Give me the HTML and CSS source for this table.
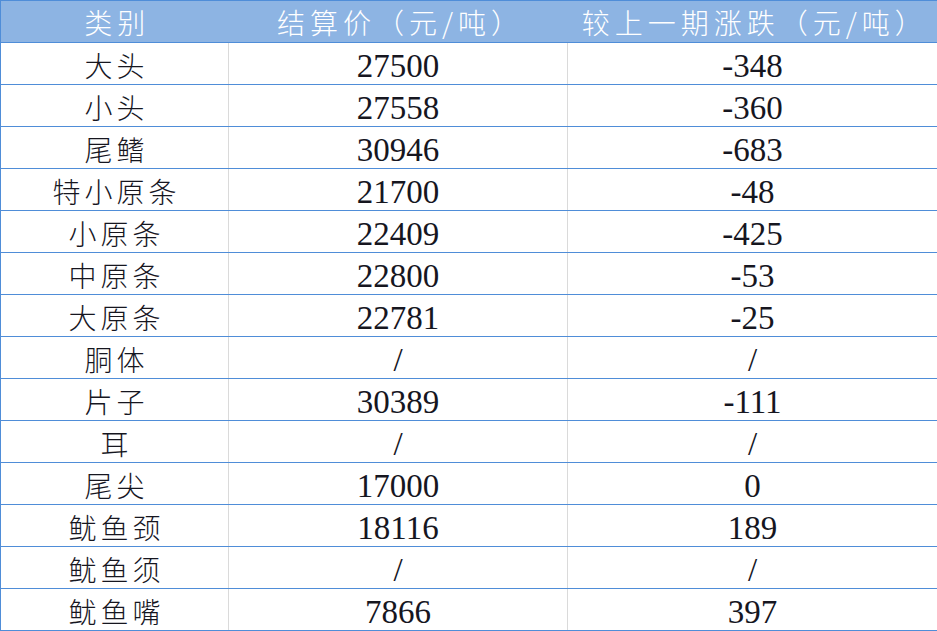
FILE: index.html
```html
<!DOCTYPE html>
<html lang="zh-CN">
<head>
<meta charset="utf-8">
<title>价格表</title>
<link rel="stylesheet" href="styles.css">
</head>
<body>
<table class="price-table">
  <colgroup>
    <col class="col-a">
    <col class="col-b">
    <col class="col-c">
  </colgroup>
  <thead>
    <tr>
      <th>类别</th>
      <th>结算价（元/吨）</th>
      <th>较上一期涨跌（元/吨）</th>
    </tr>
  </thead>
  <tbody>
    <tr><td class="cat">大头</td><td class="num">27500</td><td class="num">-348</td></tr>
    <tr><td class="cat">小头</td><td class="num">27558</td><td class="num">-360</td></tr>
    <tr><td class="cat">尾鳍</td><td class="num">30946</td><td class="num">-683</td></tr>
    <tr><td class="cat">特小原条</td><td class="num">21700</td><td class="num">-48</td></tr>
    <tr><td class="cat">小原条</td><td class="num">22409</td><td class="num">-425</td></tr>
    <tr><td class="cat">中原条</td><td class="num">22800</td><td class="num">-53</td></tr>
    <tr><td class="cat">大原条</td><td class="num">22781</td><td class="num">-25</td></tr>
    <tr><td class="cat">胴体</td><td class="num">/</td><td class="num">/</td></tr>
    <tr><td class="cat">片子</td><td class="num">30389</td><td class="num">-111</td></tr>
    <tr><td class="cat">耳</td><td class="num">/</td><td class="num">/</td></tr>
    <tr><td class="cat">尾尖</td><td class="num">17000</td><td class="num">0</td></tr>
    <tr><td class="cat">鱿鱼颈</td><td class="num">18116</td><td class="num">189</td></tr>
    <tr><td class="cat">鱿鱼须</td><td class="num">/</td><td class="num">/</td></tr>
    <tr><td class="cat">鱿鱼嘴</td><td class="num">7866</td><td class="num">397</td></tr>
  </tbody>
</table>
</body>
</html>
```

FILE: styles.css
```css
html, body {
  margin: 0;
  padding: 0;
  background: #ffffff;
}

.price-table {
  width: 937px;
  border-collapse: collapse;
  table-layout: fixed;
  border: 1px solid #4f8dd8;
  font-family: "Noto Sans CJK SC", sans-serif;
  font-weight: 300;
  color: #16161f;
}

.col-a { width: 228px; }
.col-b { width: 339px; }
.col-c { width: 370px; }

.price-table th {
  height: 41px;
  padding: 0 0 0 5px;
  background: #8db4e3;
  color: #ffffff;
  font-size: 28px;
  font-weight: 300;
  letter-spacing: 5px;
  text-align: center;
  vertical-align: middle;
  line-height: 30px;
  border-bottom: 1px solid #4f8dd8;
  border-left: none;
  border-right: none;
}

.price-table td {
  padding: 0;
  text-align: center;
  vertical-align: middle;
  line-height: 30px;
  border-bottom: 1px solid #4f8dd8;
  border-left: 1px solid #dadada;
  border-right: 1px solid #dadada;
}

.price-table td:first-child { border-left: 1px solid #4f8dd8; }
.price-table td:last-child { border-right: 1px solid #4f8dd8; }

.price-table td.cat {
  height: 39px;
  font-size: 28px;
  letter-spacing: 4px;
  padding-left: 4px;
  padding-top: 2px;
}

.price-table td.num {
  height: 36px;
  font-family: "Liberation Serif", "Noto Sans CJK SC", serif;
  font-size: 33px;
  font-weight: 400;
  padding-top: 5px;
}
```
